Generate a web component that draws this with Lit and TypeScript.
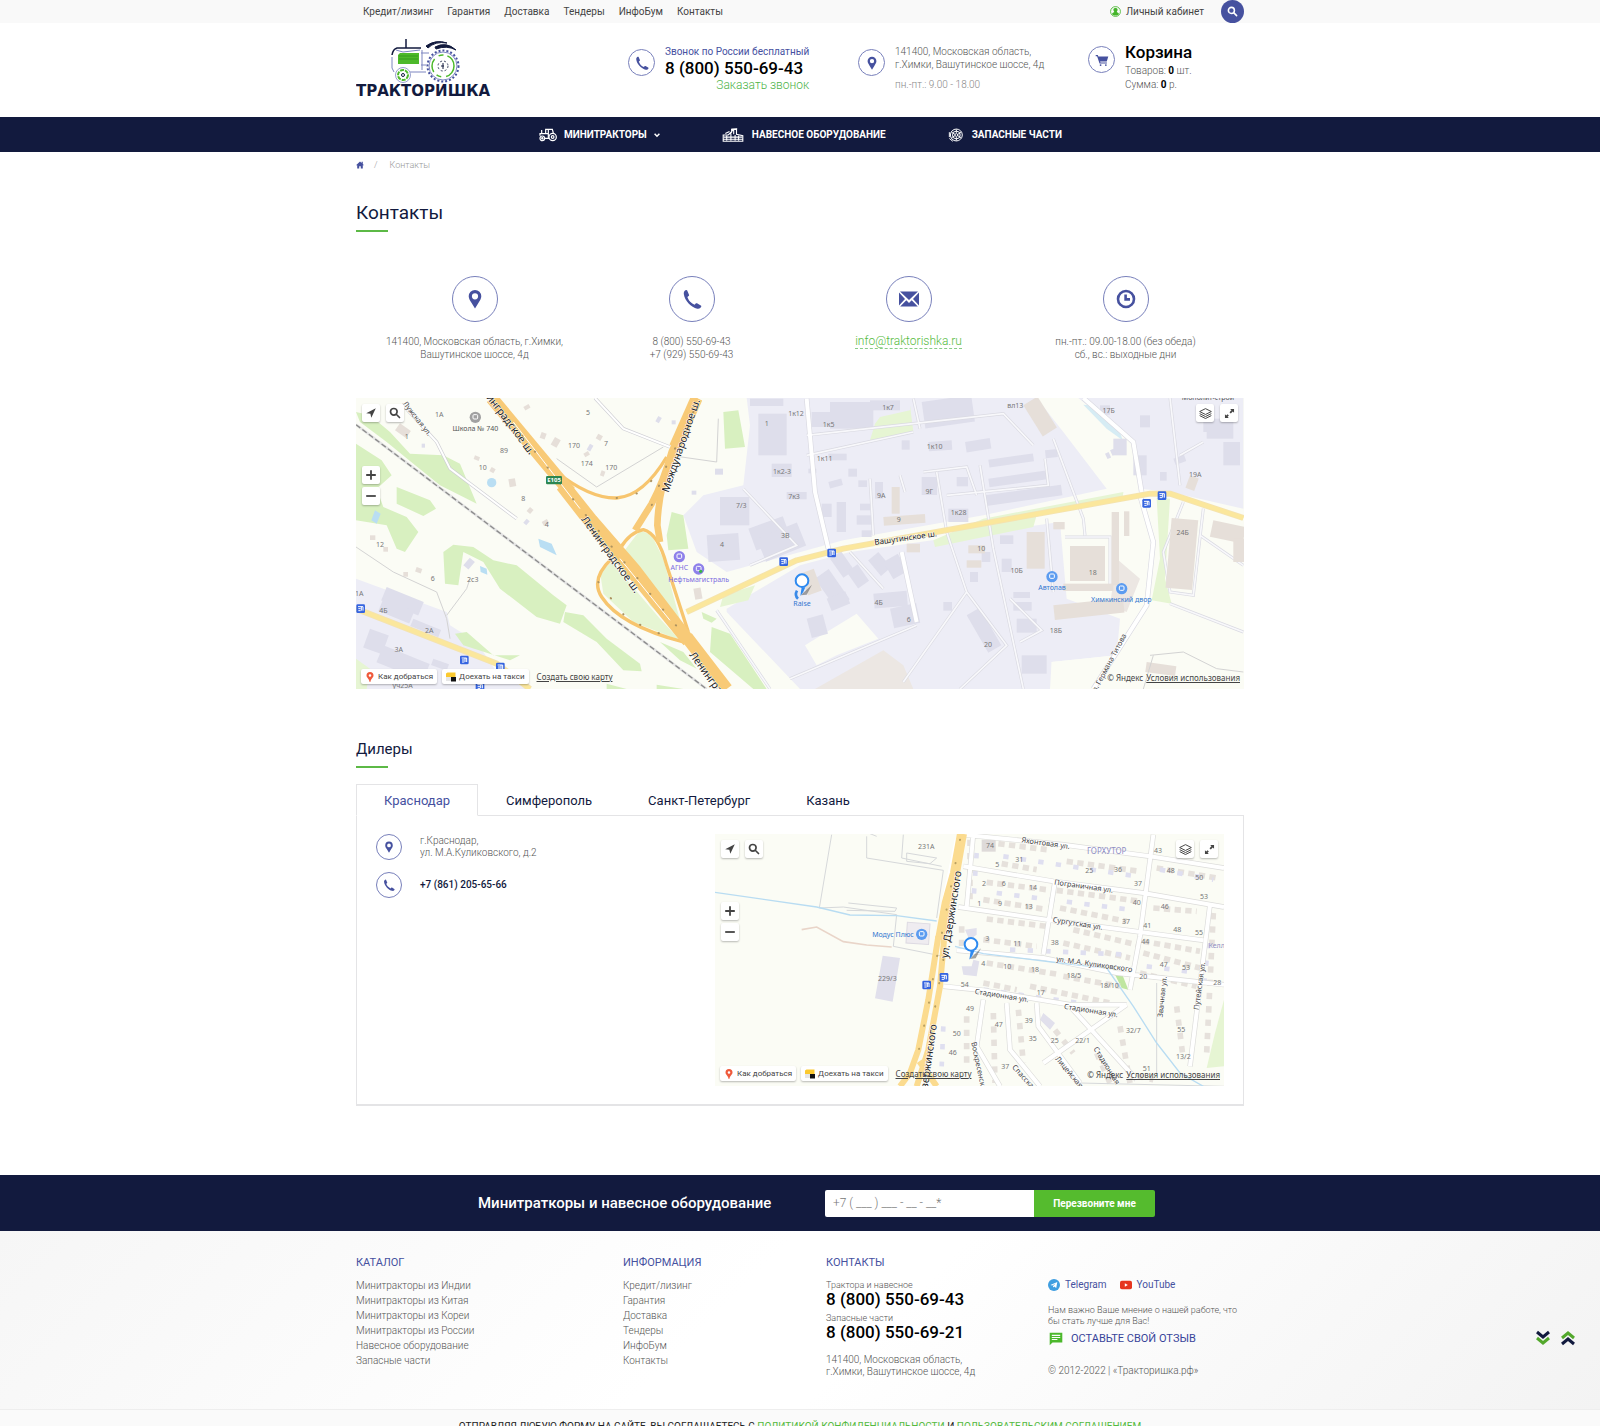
import { LitElement, html, svg, css } from "lit";
import { customElement, state } from "lit/decorators.js";
import { classMap } from "lit/directives/class-map.js";

const icons = {
  phone: svg`<path d="M5.2 1.6 7 5.8c.2.5 0 .8-.4 1.200L5.400 8c.6 1.700 1.500 3.400 2.800 4.700 1.300 1.400 2.900 2.400 4.400 3l1.100-1.200c.4-.4.8-.5 1.300-.2l3.800 2.200c.5.300.6.8.4 1.300-.7 1.500-2.300 2.300-3.900 1.900-3.200-.7-6.300-2.700-8.700-5.300C4.100 11.700 2.200 8.400 1.800 5 1.600 3.200 2.400 1.700 4 1.100c.5-.2 1 0 1.200.5Z"/>`,
  pin: svg`<path fill-rule="evenodd" d="M10 1a6.300 6.300 0 0 0-6.300 6.300c0 2.200 1.300 4.200 2.600 6.200L10 19.500l3.700-6c1.300-2 2.600-4 2.600-6.200A6.300 6.300 0 0 0 10 1Zm0 3.200a3.100 3.100 0 1 1 0 6.200 3.100 3.100 0 0 1 0-6.200Z"/>`,
  mail: svg`<path d="M0 3.500 6 10 0 16.500ZM20 3.500V16.500L14 10ZM1 2.500H19L10 11ZM1.200 17.500 7.300 11.200 10 14l2.700-2.800 6.100 6.300Z"/>`,
  clock: svg`<path fill="none" stroke="currentColor" stroke-width="2.600" d="M10 2a8 8 0 1 1 0 16 8 8 0 0 1 0-16ZM9.600 5.500V10.400H14"/>`,
  cart: svg`<path d="M1 3h3l.8 2H19l-2.200 7H7.300l.5 1.500H17V15H6.500L3 4.500H1ZM8 16a1.300 1.300 0 1 1 0 2.600A1.300 1.300 0 0 1 8 16Zm7.500 0a1.300 1.300 0 1 1 0 2.600 1.300 1.300 0 0 1 0-2.600Z"/>`,
  search: svg`<path fill="none" stroke="currentColor" stroke-width="2.800" stroke-linecap="round" d="M8 2.500a5.500 5.500 0 1 1 0 11 5.500 5.500 0 0 1 0-11ZM12.500 12.500 17.500 17.500"/>`,
  home: svg`<path d="M10 1 0 10.500h3V19h5v-6h4v6h5v-8.500h3L17 7.500V2h-3v2.800Z"/>`,
  arrow: svg`<path d="M18 2 2 10.500l7 .8L10.500 18Z"/>`,
  layers: svg`<path fill="none" stroke="currentColor" stroke-width="1.500" d="M10 2.500 19 7l-9 4.500L1 7ZM1 10.200l9 4.500 9-4.500M1 13.200l9 4.500 9-4.500"/>`,
  expand: svg`<path d="M11 3h6v6l-2-2-3 3-2-2 3-3ZM9 17H3v-6l2 2 2-2 2 2-2 2Z"/>`,
  plus: svg`<path d="M8.500 2h3v6.500H18v3h-6.500V18h-3v-6.500H2v-3h6.500Z"/>`,
  minus: svg`<path d="M2 8.500h16v3H2Z"/>`,
  user: svg`<circle cx="10" cy="10" r="9" fill="none" stroke="currentColor" stroke-width="1.500"/><path d="M10 3a4 4 0 0 1 2.500 7v1.200c2 .6 3.800 1.500 3.800 3.200-3 4-9.600 4-12.600 0 0-1.700 1.800-2.600 3.800-3.200V10A4 4 0 0 1 10 3Z"/>`,
  review: svg`<path fill-rule="evenodd" d="M1 1h18v14H5l-4 4ZM4 4v1.600h12V4ZM4 7v1.600h12V7ZM4 10v1.600h8V10Z"/>`,
  telegram: svg`<circle cx="10" cy="10" r="10" fill="#3f9ee0"/><path fill="#fff" d="M4 9.800 15.500 5.200 13.700 15 10.300 12.600 8.600 14.200 8.300 11.500 12.800 7.500 7 10.900Z"/>`,
  youtube: svg`<rect y="3" width="20" height="14" rx="3" fill="#e6351f"/><path fill="#fff" d="M8 7v6l5-3Z"/>`,
  route: svg`<path fill="#ef5a3c" fill-rule="evenodd" d="M10 0a7 7 0 0 0-7 7c0 4.500 5 6 6.300 13h1.400C12 13 17 11.500 17 7a7 7 0 0 0-7-7Zm0 4.500a2.600 2.600 0 1 1 0 5.200 2.600 2.600 0 0 1 0-5.200Z"/>`,
  taxi: svg`<path fill="#fbc92f" d="M0 3 3 1H19V10H0Z"/><path fill="#111" d="M10 10h10v9H10Z"/><path fill="#e6e6e6" d="M0 10h10v8H0Z"/>`,
  tractor: svg`<g fill="none" stroke="currentColor" stroke-width="1.800"><circle cx="5" cy="15" r="3.500"/><circle cx="5" cy="15" r="1"/><circle cx="20.500" cy="13" r="5.500"/><circle cx="20.500" cy="13" r="2"/><path d="M1.500 11V8H10V1.500H20L21.500 7M10 8h4V14M8.500 15H15M4 8V2.500M14 2v6"/></g>`,
  loader: svg`<g fill="none" stroke="currentColor" stroke-width="1.600"><path d="M1 19V10H8L13 6V2H20V9L29 11V19ZM9 9 15 3M16 3V9M2 13H28M1 16H29M6 11V18M12 8V18M18 10V18M23 11V18"/><path d="M4 8 10 5M13 2 21 1"/></g>`,
  part: svg`<g fill="none" stroke="currentColor" stroke-width="1.400"><circle cx="11" cy="10" r="8.500"/><circle cx="11" cy="10" r="5.500"/><circle cx="11" cy="10" r="2"/><path d="M11 2v5M4 6l5 3M4 14l5-3M11 18v-5M18 6l-5 3M18 14l-5-3M1 6v7M1 15l5 4"/></g>`,
};

const icon = (name: keyof typeof icons) =>
  html`<svg class="icon" viewBox="0 0 20 20" aria-hidden="true">${icons[name]}</svg>`;

type Label = [text: string, x: number, y: number, kind?: string, angle?: number];
const labels = (list: Label[]) =>
  list.map(([t, x, y, kind = "num", a = 0]) =>
    svg`<text class=${kind} x=${x} y=${y} text-anchor="middle" transform="rotate(${a} ${x} ${y})">${t}</text>`);
const stops = (list: [number, number][]) =>
  list.map(([x, y]) => svg`<g><rect x=${x - 13} y=${y - 13} width="26" height="26" rx="4" fill="#3564e0"/><path d="M${x - 8} ${y - 6}h15v12M${x + 2} ${y - 6}v12M${x - 7} ${y}h7M${x - 7} ${y + 6}h7" fill="none" stroke="#fff" stroke-width="3"/></g>`);
const poi = (x: number, y: number, color: string) =>
  svg`<circle cx=${x} cy=${y} r="17" fill=${color}/><rect x=${x - 7} y=${y - 8} width="14" height="13" rx="3" fill="none" stroke="#fff" stroke-width="3"/>`;
const marker = (x: number, y: number) =>
  svg`<path d="M${x} ${y}l34-32-16 30Z" fill="#5558" /><circle cx=${x + 4} cy=${y - 44} r="19" fill="#fff" stroke="#2e8af0" stroke-width="6"/><path d="M${x + 14} ${y - 24}Q${x + 9} ${y - 8} ${x - 1} ${y + 2}L${x + 3} ${y - 24}Z" fill="#2e8af0"/>`;

/** Houses in a block: x, y, w, h and an optional slant in degrees. */
type House = [number, number, number, number, number?];
const houses = (list: House[]) =>
  list.map(([x, y, w, h, a = 0]) => svg`<rect x=${x} y=${y} width=${w} height=${h} transform="rotate(${a} ${x} ${y})"/>`);

const khimkiGray: House[] = [
  [1225, 65, 85, 125], [1095, 230, 24, 18], [1110, 315, 88, 85], [1070, 430, 95, 80, -4], [1195, 410, 110, 70, -20], [1220, 440, 130, 75, -22],
  [1200, 20, 100, 22], [1265, 215, 60, 40], [1310, 300, 60, 22],
  [1385, 60, 70, 45], [1440, 30, 130, 80], [1560, 25, 90, 30], [1715, 30, 150, 80, -8], [1655, 145, 24, 28], [1735, 150, 70, 28, -4], [1845, 150, 75, 32, -9], [1915, 203, 135, 24, -8], [2085, 175, 36, 24, -6],
  [1435, 185, 55, 20], [1495, 230, 26, 24], [1525, 265, 26, 20], [1435, 270, 40, 20, -15], [1575, 270, 24, 50], [1715, 255, 46, 54], [1820, 255, 34, 28], [1915, 260, 180, 26, -8], [1905, 310, 230, 32, -8], [1795, 350, 60, 40],
  [1415, 335, 30, 40], [1460, 330, 28, 90], [1530, 335, 30, 20], [1520, 370, 45, 28], [1535, 415, 30, 20],
  [1440, 500, 40, 70, -35], [1490, 540, 40, 60, -35], [1585, 480, 60, 40, 50], [1600, 510, 50, 60, -30], [1570, 605, 100, 45, -5], [1620, 650, 80, 60, -12], [1395, 560, 50, 110, -35], [1370, 680, 50, 60, -15], [1430, 620, 60, 40, -22],
  [1850, 670, 45, 130, -30], [1780, 630, 26, 26], [1895, 480, 26, 30], [1860, 540, 24, 30], [1950, 430, 40, 26], [1955, 500, 30, 40], [1990, 600, 50, 18], [1990, 630, 55, 26], [2000, 680, 60, 42], [2015, 790, 75, 55],
  [2250, 40, 30, 28], [2290, 140, 40, 50], [2370, 70, 30, 36], [2350, 190, 40, 60], [2560, 60, 30, 60], [2570, 80, 80, 60], [2620, 150, 50, 70], [2430, 240, 20, 26], [2470, 200, 34, 20, -20], [2265, 185, 12, 18, -25], [2280, 175, 12, 18, -25],
  [110, 585, 120, 44, 22], [100, 620, 100, 40, 22], [190, 680, 90, 24, 22], [60, 710, 60, 60, 20], [100, 760, 150, 55, 22], [250, 800, 50, 20, 20], [340, 520, 30, 20, -50], [1375, 230, 24, 14], [215, 155, 10, 12], [530, 380, 12, 16, 40], [925, 72, 12, 18, 30], [720, 155, 12, 20, 30], [965, 85, 12, 12], [1025, 296, 14, 12],
];
const khimkiBeige: House[] = [
  [2020, 40, 50, 110, -32], [1625, 285, 24, 80], [1600, 375, 125, 26, -4], [1670, 455, 40, 26], [1855, 460, 50, 24], [1850, 505, 44, 22], [2030, 420, 54, 110], [2110, 390, 34, 22], [2160, 462, 105, 105], [2285, 360, 22, 220], [2322, 358, 16, 74], [2140, 575, 150, 22], [2110, 640, 210, 44, -6], [2465, 378, 80, 210, 5], [2590, 385, 100, 50, 12], [2650, 440, 40, 70], [2390, 810, 90, 30, 8], [2520, 250, 28, 40, 20],
  [1350, 545, 44, 70, -20], [135, 115, 26, 40, -55], [615, 135, 20, 26, 30], [520, 45, 18, 12, -30], [575, 120, 16, 18, 20], [745, 125, 16, 16, 30], [425, 225, 14, 14, 30], [475, 262, 20, 24, -10], [540, 345, 14, 16, 40], [755, 235, 12, 16, 20], [375, 190, 16, 12, 20], [575, 390, 18, 14, -30], [700, 185, 16, 12, -30], [60, 430, 16, 14], [100, 465, 14, 14], [200, 525, 18, 14, 20], [160, 540, 14, 14], [1030, 590, 22, 34, -10],
];
const khimkiLabels: Label[] = [
  ["Лужская ул.", 196, 84, "street small", 52], ["Ленинградское ш.", 456, 80, "street", 53], ["Ленинградское ш.", 774, 494, "street", 54], ["Ленинградское ш.", 1098, 900, "street", 54], ["Международное ш.", 1003, 164, "street", -71],
  ["Вашутинское ш.", 1668, 446, "street mid", -8], ["ул. Германа Титова", 2282, 820, "street small", -62],
  ["Школа № 740", 376, 118, "place"], ["АГНС", 988, 534, "violet"], ["Нефтьмагистраль", 1046, 570, "violet"], ["Raise", 1356, 641, "blue"], ["Автолав", 2106, 595, "blue"], ["Химкинский двор", 2314, 630, "blue"], ["Монолит-строй", 2574, 24, "place"],
  ["1А", 268, 76], ["1", 170, 140], ["89", 462, 184], ["10", 398, 235], ["5", 714, 69], ["170", 672, 168], ["7", 768, 161], ["174", 710, 222], ["170", 784, 233], ["8", 520, 326], ["4", 590, 404], ["12", 90, 465], ["6", 248, 568], ["2с3", 368, 570], ["1А", 28, 612], ["4Б", 100, 664], ["2А", 238, 724], ["3А", 146, 781], ["уч25А", 158, 888],
  ["1", 1250, 102], ["1к12", 1338, 72], ["1к2-3", 1296, 246], ["7/3", 1174, 348], ["3В", 1306, 437], ["4", 1116, 464], ["7к3", 1332, 320],
  ["1к7", 1614, 54], ["1к5", 1436, 104], ["1к10", 1754, 172], ["1к11", 1424, 206], ["9А", 1594, 318], ["9Г", 1738, 306], ["9", 1646, 389], ["1к28", 1826, 369], ["10", 1894, 478], ["10Б", 2000, 542], ["4Б", 1586, 639], ["6", 1676, 690], ["20", 1914, 764], ["18Б", 2118, 724], ["18", 2228, 548], ["вл13", 1996, 49], ["17Б", 2276, 64], ["19А", 2536, 255], ["24Б", 2498, 428],
];

const khimkiLanes = "M1370 130 1960 65 2050 160M1370 190 1690 120M1560 260 1570 430M1690 20 1710 110M1650 250 1665 300M1720 240 1850 225 1880 310M1790 310 2095 280 2085 200M1760 240 1790 420 1850 600 1660 870M1890 220 1930 470 2020 891M1500 480 1600 590M1700 700 1320 860M1850 600 1970 760 1830 891M1980 620 2075 715 2010 750M2110 140 2200 380 2205 430M2090 380 2110 600M2145 435 2280 435 2280 580 2150 590M2460 18 2490 280M2490 190 2560 150M2500 330 2440 480 2460 600 2530 610 2560 350M2550 430 2680 520M2460 635 2680 720M1100 655 1260 891M1180 290 1340 460 1200 520";
const khimkiRoads = "M1370 20 1395 300 1440 490M1655 480 1700 690M2370 310 2410 450 2390 640 2230 891M2200 18 2350 150 2375 300";

const khimki = () => svg`
  <rect x="18" y="18" width="2664" height="873" fill="#fbfcf5"/>
  <path fill="#ededf6" d="M1190 18H2060L2140 120 2270 290 1900 370 1480 445 1130 540 1040 480 1000 370 1060 310 1180 280 1200 100Z M1130 650 1350 520 1500 480 2130 390 2150 620 2310 680 2300 790 2105 810V891H1350L1130 660Z M2185 18H2680V350L2460 300 2370 290 2350 150Z M18 560 290 660 300 700 380 750 440 840 530 891H18Z"/>
  <g fill="#d8f0c0"><path d="M18 60 60 70 120 120 180 185 280 190 330 215 380 335 270 280 190 215 110 150 30 90Z M18 155 95 205 125 250 80 290 100 345 170 375 205 420 165 480 140 470 110 400 18 385Z M140 285 240 325 258 350 220 372 140 335Z M280 480 310 458 370 465 430 505 500 520 610 610 650 640 630 695 560 675 450 590 400 510 340 480 325 580 285 575Z M645 660 700 670 770 740 870 815 875 838 820 835 740 750 640 690Z M315 725 350 720 430 790 510 790 480 805 340 760Z M1120 60 1165 55 1185 165 1125 170Z M965 360 1000 370 1015 470 955 475 950 430Z M1085 705 1140 725 1190 800 1250 891H1210L1080 780Z M1055 660 1100 680 1085 692 1060 680Z M930 750 1000 780 1040 830 990 805Z M770 875 830 891H770Z M920 878 1000 891H920Z"/></g>
  <g fill="#e6f5d3"><path d="M1680 40 1690 120 1560 145 1575 95 1590 75 1680 55Z M1900 380 2320 300 2318 318 2060 370 2050 405 1755 465 1750 445Z M2420 318 2460 320 2445 560 2465 635 2405 625 2430 500Z M1120 610 1215 580 1195 625 1110 645Z M870 415 905 430 940 500 1005 740 900 640 820 480Z M750 540 785 510 930 680 990 745 850 690 760 605Z M18 800 60 830 50 891H18Z"/></g>
  <g fill="#b9def3"><circle cx="425" cy="272" r="14"/><path d="M75 355 92 365 80 395 64 385ZM565 440 605 455 620 490 570 465ZM390 522 410 530 412 548 392 540Z"/><path fill="#d6ecf4" d="M2200 38 2240 42 2310 120 2318 145 2270 110Z"/></g>
  <path fill="#ece7e3" d="M1395 891 1600 775 1660 820 1690 891Z M2300 500 2370 560 2330 660 2280 640Z"/>
  <path fill="#fbfcf5" d="M1365 760 1520 665 1585 740 1460 790 1400 820Z M2105 810 2300 790 2250 891H2100Z"/>
  <g fill="#dedeeb">${houses(khimkiGray)}</g>
  <g fill="none" stroke="#dadae2" stroke-width="9"><path d=${khimkiLanes}/><path stroke-width="16" d=${khimkiRoads}/></g>
  <g fill="none" stroke="#f8f8fb" stroke-width="5"><path d=${khimkiLanes}/><path stroke="#fff" stroke-width="12" d=${khimkiRoads}/></g>
  <g fill="#e6dfd9">${houses(khimkiBeige)}</g>
  <g fill="none" stroke="#d3d3d3" stroke-width="3"><path d="M18 465 130 540 260 600 290 680 300 740M290 670 350 590 360 560M1105 80 1100 210 960 190M620 200 740 285 940 165M2400 790 2500 780 2600 830 2680 840M2410 790 2380 891"/></g>
  <g fill="none"><path stroke="#cfcfd4" stroke-width="10" d="M160 40 260 150 300 230 500 380M735 18 820 110 960 165"/><path stroke="#fff" stroke-width="6" d="M160 40 260 150 300 230 500 380M735 18 820 110 960 165"/></g>
  <path d="M18 98 1070 891" fill="none" stroke="#e4e4e4" stroke-width="8"/><path d="M18 98 1070 891" fill="none" stroke="#8b8b8b" stroke-width="4" stroke-dasharray="16 8"/>
  <g fill="none" stroke-linejoin="round"><path stroke="#f4e3b0" stroke-width="18" d="M18 650 300 760 440 815 540 891M1010 660 1340 505 1480 470 2400 305 2460 305 2680 378"/><path stroke="#fbe79c" stroke-width="13" d="M18 650 300 760 440 815 540 891M1010 660 1340 505 1480 470 2400 305 2460 305 2680 378"/>
    <path stroke="#f7c56e" stroke-width="10" d="M620 240Q720 320 800 318 880 312 950 195M810 470Q840 420 880 413 925 425 950 520L1015 720M785 500Q720 560 755 615 810 700 1000 750"/>
    <path stroke="#f8ca77" stroke-width="20" d="M1040 18 965 180Q940 270 905 335L855 415"/><path stroke="#f8ca77" stroke-width="20" d="M1040 30 960 210Q925 300 922 400L930 450"/><path stroke="#f8ca77" stroke-width="36" d="M1040 18 975 165"/>
    <path stroke="#f8ca77" stroke-width="38" d="M425 18 660 300M1010 735 1130 891"/>
    <path stroke="#f8ca77" stroke-width="24" d="M650 280 730 380 860 530 1020 740M630 285 700 375 850 555 1010 752"/><path stroke="#fff" stroke-width="3" d="M490 90 690 350M810 500 960 685"/></g>
  <g fill="none" stroke="#ad9360" stroke-width="6" stroke-dasharray="1 60" stroke-linecap="round"><path d="M440 36 700 360 990 715M1030 60 950 220 905 340M800 318 880 300 930 230M745 570 830 680 980 748"/></g>
  <rect x="588" y="252" width="48" height="25" rx="4" fill="#2c8650"/><text class="badge" x="612" y="271" text-anchor="middle">E105</text>
  ${poi(376, 76, "#a1a1a1")}${poi(988, 494, "#8e80ea")}${poi(1046, 531, "#8e80ea")}<circle cx="1052" cy="538" r="5" fill="#38b444"/>
  ${poi(2106, 554, "#5c9cf0")}${poi(2315, 590, "#5c9cf0")}
  ${stops([[1301, 509], [1445, 483], [2390, 334], [2436, 311], [32, 650], [343, 804], [451, 825], [390, 883]])}
  ${labels(khimkiLabels)}
  <path d="M1341 596q-8 14 3 24" fill="none" stroke="#3a8ae8" stroke-width="8"/>${marker(1352, 610)}`;

const krasnodarLabels: Label[] = [
  ["ул. Дзержинского", 734, 286, "street", -81], ["ул. Дзержинского", 662, 746, "street", -82], ["Модус Плюс", 549, 351, "blue"], ["ГОРХУТОР", 1190, 104, "area"], ["Келлерова", 1550, 386, "area2"],
  ["Яхонтовая ул.", 1006, 78, "street small", 8], ["Пограничная ул.", 1120, 207, "street small", 8], ["Сургутская ул.", 1102, 319, "street small", 9], ["ул. М.А. Куликовского", 1152, 441, "street small", 8], ["Стадионная ул.", 874, 535, "street small", 9], ["Стадионная ул.", 1142, 580, "street small", 9], ["Звачная ул.", 1364, 532, "street small", -84], ["Путейская ул.", 1476, 500, "street small", -82], ["Воскресенская", 800, 746, "street small", 78], ["Спасская", 938, 780, "street small", 48], ["Лицейская", 1072, 762, "street small", 50], ["Стадионная", 1184, 742, "street small", 58],
  ["231А", 649, 88], ["229/3", 532, 485], ["54", 764, 502], ["49", 780, 575], ["50", 740, 648], ["46", 728, 705], ["74", 840, 84], ["31", 928, 126], ["5", 862, 142], ["2", 822, 199], ["6", 881, 199], ["14", 969, 210], ["1", 808, 258], ["9", 870, 258], ["13", 956, 269], ["25", 1138, 160], ["36", 1224, 156], ["37", 1284, 199], ["40", 1280, 256], ["43", 1344, 100], ["48", 1382, 160], ["50", 1468, 180], ["53", 1482, 239], ["46", 1364, 269], ["41", 1312, 324], ["48", 1402, 337], ["55", 1467, 346], ["37", 1248, 312], ["3", 832, 364], ["11", 922, 378], ["38", 1034, 375], ["44", 1306, 374], ["47", 1361, 443], ["53", 1428, 452], ["4", 820, 438], ["10", 892, 448], ["18", 975, 458], ["18/5", 1092, 475], ["18/10", 1198, 504], ["20", 1300, 478], ["28", 1522, 497], ["17", 992, 526], ["47", 866, 621], ["39", 956, 609], ["35", 968, 664], ["25", 1034, 670], ["22/1", 1118, 671], ["32/7", 1270, 639], ["55", 1414, 637], ["13/2", 1420, 718], ["51", 1310, 753], ["37", 886, 747],
];

const krasnodarStreets = "M760 45 1060 75 1320 110 1542 145M760 140 1030 185 1300 220 1542 262M745 262 1010 300 1480 362M740 392 1000 415 1220 460 1542 495M700 500 820 512 1080 555 1250 555M790 42 770 262M1330 45 1290 350 1260 510M1035 185 1000 405M1500 255 1440 740M820 540 800 680 870 800M890 550 900 690 990 800M980 550 985 620 1110 790M1080 560 1280 780M1250 555 1000 730";

const krasnodar = () => svg`
  <rect x="15" y="42" width="1527" height="758" fill="#fbfcf5"/>
  <path fill="#e6f5d3" d="M1542 540 1515 640 1490 745 1542 740Z"/><path fill="#bfe6a0" d="M1205 445 1235 460 1255 510 1235 505ZM1018 245 1012 295 1020 292Z"/>
  <g fill="none" stroke="#e6e1dc" stroke-width="17" stroke-dasharray="19 13">
    <path d="M865 72 1010 90M1070 125 1290 155M875 132 980 150M1340 145 1520 175M830 188 1010 210M1040 212 1290 245M820 240 1000 268M1330 265 1460 275M1050 265 1250 305M830 298 1010 320M1090 330 1280 375M820 360 980 380M1060 370 1260 415M1300 365 1470 395M1300 400 1470 445M830 430 1050 465M1060 470 1230 500M1290 460 1460 500M820 490 920 510M960 500 1200 550"/>
    <path d="M770 590V740M850 580 855 790M925 570 940 730M1010 600 1090 700M1230 620 1260 790M1400 560 1420 720M1510 280 1490 700M780 60V250M1160 700 1200 790M755 320V400M1280 770 1330 780" stroke-dasharray="19 21"/>
  </g>
  <g fill="none" stroke="#dfdff0" stroke-width="14" stroke-dasharray="16 37"><path d="M880 110 1280 170M860 220 1260 270M900 390 1250 405M820 510 1180 560M1310 440 1470 460M1350 150 1510 180M800 100 790 250M700 620 695 740M1495 370 1480 520"/></g>
  <g fill="#e1e0ec"><path d="M518 408 570 415 548 546 495 536ZM755 440 785 440 790 420 808 425 800 470 760 465ZM765 330 800 325V345L778 360ZM1000 580 1035 610 1020 630 990 600Z"/></g>
  <rect x="590" y="310" width="68" height="62" fill="#efecf0" stroke="#dddae2" stroke-width="3" transform="rotate(4 620 340)"/>
  <path fill="#dedad9" d="M815 60h42v36h-42Z"/>
  <g fill="none" stroke="#d6d8da" stroke-width="3"><path d="M365 45 328 265 400 262 560 285 550 380 700 410M470 50V115L700 152 680 295M580 45 575 115 695 140M590 100 680 115 660 132 590 125ZM415 250 560 265 555 275 410 272M480 42 500 50M1340 490V770M1110 790 1542 800"/></g>
  <path d=${krasnodarStreets} fill="none" stroke="#dcdcda" stroke-width="16"/>
  <g fill="none" stroke="#fff" stroke-width="12"><path d="${krasnodarStreets}M740 60 690 300"/></g>
  <g fill="none" stroke="#b8dcf2" stroke-width="4"><path d="M15 218 320 262 420 286 560 288 680 304M735 380 820 402 1050 430 1190 445 1270 560 1340 670 1410 760 1480 800"/></g>
  <path d="M275 330 320 322 400 366 470 376 545 382" fill="none" stroke="#e9d5c9" stroke-width="5"/>
  <g fill="none" stroke="#fbdb8f" stroke-linejoin="round"><path stroke-width="30" d="M756 42 735 160 710 250 690 360"/><path stroke-width="18" d="M685 350 655 540 625 690 600 760 570 800M703 350 690 500 655 690 620 800M628 725 680 800"/></g>
  <g fill="none" stroke="#b9a062" stroke-width="6" stroke-dasharray="1 70" stroke-linecap="round"><path d="M750 60 700 320 675 440 655 560 618 730M700 420 660 650"/></g>
  ${poi(635, 344, "#5c9cf0")}${stops([[702, 473], [650, 496]])}
  ${labels(krasnodarLabels)}${marker(779, 418)}`;

@customElement("area-map")
export class AreaMap extends LitElement {
  static properties = { area: {}, name: {} };
  declare area: string;
  declare name: string;
  static styles = css`
    :host { display: block; position: relative; overflow: hidden; font-family: "Noto Sans", sans-serif; font-weight: 400; }
    .canvas { display: block; width: 100%; height: 100%; }
    .canvas text { font-size: 21px; fill: #777; }
    .canvas .street { font-size: 31px; fill: #222; stroke: #fff; stroke-width: 3px; paint-order: stroke; }
    .canvas .mid { font-size: 24px; }
    .canvas .small { font-size: 22px; fill: #444; }
    .canvas .place { font-size: 21px; fill: #555; }
    .canvas .blue { font-size: 21px; fill: #3377d0; }
    .canvas .violet { font-size: 21px; fill: #7b6be0; }
    .canvas .area { font-size: 24px; fill: #8f8fc4; }
    .canvas .area2 { font-size: 21px; fill: #8f8fc4; }
    .canvas .badge { font-size: 18px; font-weight: 700; fill: #fff; }
    .icon { width: 12px; height: 12px; fill: currentColor; flex: none; }
    .tools, .zoom, .view, .actions, .rights { position: absolute; display: flex; }
    .tools { left: 6px; top: 6px; gap: 6px; }
    .view { right: 6px; top: 6px; gap: 6px; }
    .zoom { left: 6px; top: 68px; gap: 3px; flex-direction: column; }
    .actions { left: 5px; bottom: 5px; gap: 5px; align-items: center; }
    .rights { right: 4px; bottom: 5px; gap: 3px; color: #444; font-size: 8px; line-height: 12px; }
    button { display: flex; align-items: center; justify-content: center; width: 18px; height: 18px; padding: 0; border: 0; border-radius: 2px; background: #fff; color: #444; box-shadow: 0 1px 2px #0004; font: 8px/14px Roboto, "Noto Sans", sans-serif; }
    .view .icon { width: 13px; height: 13px; }
    .actions button { width: auto; height: 15px; padding: 0 4px; gap: 3px; }
    .actions .icon { width: 10px; height: 10px; }
    a { color: #444; font-size: 8px; line-height: 12px; }
    .actions a { margin-left: 3px; }
  `;
  render() {
    const first = this.area === "khimki";
    return html`
      <svg class="canvas" viewBox=${first ? "18 18 2664 873" : "15 42 1527 758"} preserveAspectRatio="xMidYMid slice" role="img" aria-label=${this.name}>
        ${first ? khimki() : krasnodar()}
      </svg>
      <div class="tools"><button aria-label="Моё местоположение">${icon("arrow")}</button><button aria-label="Поиск по карте">${icon("search")}</button></div>
      <div class="zoom"><button aria-label="Приблизить">${icon("plus")}</button><button aria-label="Отдалить">${icon("minus")}</button></div>
      <div class="view"><button aria-label="Слои">${icon("layers")}</button><button aria-label="На весь экран">${icon("expand")}</button></div>
      <div class="actions"><button>${icon("route")}Как добраться</button><button>${icon("taxi")}Доехать на такси</button><a href="#">Создать свою карту</a></div>
      <div class="rights"><span>© Яндекс</span><a href="#">Условия использования</a></div>`;
  }
}

const menu = ["Кредит/лизинг", "Гарантия", "Доставка", "Тендеры", "ИнфоБум", "Контакты"];
const catalog = ["Минитракторы из Индии", "Минитракторы из Китая", "Минитракторы из Кореи", "Минитракторы из России", "Навесное оборудование", "Запасные части"];
const cities = ["Краснодар", "Симферополь", "Санкт-Петербург", "Казань"];

@customElement("app-root")
export class AppRoot extends LitElement {
  @state() private city = 0;

  static styles = css`
    :host { display: block; font: 300 10px/13px Roboto, "Noto Sans", sans-serif; color: #555; background: #fff; }
    * { box-sizing: border-box; }
    a { color: inherit; text-decoration: none; }
    button, input { font-family: inherit; }
    p, h1, h2, h3, ul { margin: 0; padding: 0; }
    ul { list-style: none; }
    .icon { width: 14px; height: 14px; fill: currentColor; color: #46519f; flex: none; }
    .wrap { width: 100%; max-width: 888px; margin: 0 auto; }
    .top { background: #f9f9f9; }
    .top .wrap { display: flex; align-items: center; height: 23px; color: #444; font-weight: 400; }
    .links { display: flex; gap: 14px; padding-left: 7px; margin-right: auto; }
    .account { display: flex; align-items: center; gap: 5px; margin-right: 17px; }
    .account .icon { width: 11px; height: 11px; color: #44b52a; }
    .find { display: grid; place-items: center; width: 23px; height: 23px; padding: 0; border: 0; border-radius: 50%; background: #46519f; }
    .find .icon { width: 11px; height: 11px; color: #fff; }
    .head { display: grid; grid-template-columns: 272px 230px 230px 1fr; height: 94px; padding-top: 15px; }
    .logo { display: block; width: 140px; height: 64px; }
    .logo text { font: 700 15px "DejaVu Sans", sans-serif; fill: #121a3e; }
    .block { display: flex; gap: 10px; align-items: flex-start; }
    .ring { display: grid; place-items: center; flex: none; width: 27px; height: 27px; margin-top: 11px; border: 1px solid #7880bb; border-radius: 50%; }
    .lead { padding-top: 7px; }
    .lead p { white-space: nowrap; }
    .call { color: #46519f; font-weight: 400; }
    .tel { display: block; color: #000; font-weight: 500; font-size: 17px; line-height: 20px; white-space: nowrap; }
    .order { display: block; text-align: right; color: #4db348; font-size: 12px; line-height: 14px; }
    .hours { padding-top: 7px; color: #888; }
    .cart .ring { margin-top: 8px; }
    .cart h2 { color: #000; font-weight: 500; font-size: 17px; line-height: 20px; padding-bottom: 2px; }
    .cart b { color: #000; font-weight: 700; }
    .cart .lead { padding-top: 4px; line-height: 14px; }
    .nav { background: #121a3e; color: #fff; }
    .nav .wrap { display: flex; align-items: center; gap: 61px; height: 35px; padding-left: 183px; font-weight: 700; line-height: 16px; }
    .nav a { display: flex; align-items: center; gap: 7px; white-space: nowrap; }
    .nav .icon { color: #fff; width: 18px; height: 14px; }
    .nav .icon.down { width: 6px; height: 6px; }
    .nav .icon.big { width: 24px; }
    .crumbs { display: flex; align-items: center; gap: 10px; padding-top: 7px; font-size: 9px; line-height: 12px; color: #999; }
    .crumbs .icon { display: block; width: 8px; height: 8px; }
    .crumbs span:last-child { margin-left: 2px; }
    .title { color: #121a3e; font-weight: 400; }
    .title::after { content: ""; display: block; width: 32px; height: 2px; background: #5cb946; }
    h1.title { margin-top: 29px; font-size: 19px; line-height: 26px; }
    h1.title::after { margin-top: 4px; }
    .ways { display: grid; grid-template-columns: repeat(4, 1fr); margin: 44px 10px 0; height: 122px; text-align: center; }
    .ways .ring { width: 46px; height: 46px; margin: 0 auto 13px; }
    .ways .icon { width: 20px; height: 20px; }
    .mail { color: #55bb40; font-size: 12px; border-bottom: 1px dashed #8c8; }
    .main-map { height: 291px; }
    h2.title { margin-top: 50px; font-size: 15px; line-height: 20px; }
    h2.title::after { margin-top: 7px; }
    .tabs { display: flex; margin-top: 16px; }
    .tabs button { padding: 0 27px; height: 32px; margin-bottom: -1px; border: 1px solid transparent; background: none; color: #121a3e; font-size: 13px; font-weight: 400; }
    .tabs .on { border-color: #e4e4e6; border-bottom-color: #fff; background: #fff; color: #46519f; }
    .panel { display: grid; grid-template-columns: 1fr 509px; padding: 18px 19px; border: 1px solid #e4e4e6; border-bottom-width: 2px; }
    .dealer { display: grid; gap: 12px; align-content: start; }
    .dealer .row { display: flex; align-items: center; gap: 18px; line-height: 12px; }
    .dealer .ring { margin: 0; width: 26px; height: 26px; }
    .dealer a { color: #121a3e; font-weight: 500; }
    .dealer .icon { width: 12px; height: 12px; }
    .dealer-map { height: 252px; }
    .ask { margin-top: 69px; background: #121a3e; }
    .ask .wrap { display: flex; align-items: center; gap: 51px; height: 56px; padding-left: 122px; }
    .ask h2 { color: #fff; font-weight: 500; font-size: 15px; line-height: 20px; min-width: 296px; white-space: nowrap; }
    .ask form { display: flex; width: 330px; height: 27px; }
    .ask input { width: 209px; min-width: 0; padding: 0 8px; border: 0; border-radius: 2px 0 0 2px; background: #fff; font-size: 12px; font-weight: 300; }
    .ask input::placeholder { color: #777; opacity: 1; }
    .ask form button { flex: 1; padding: 0; border: 0; border-radius: 0 2px 2px 0; background: #55bb2e; color: #fff; font-size: 10px; font-weight: 700; }
    .foot { background: linear-gradient(135deg, #f6f6f6 0, #fbfbfb 25%, #fff 45%, #fff 55%, #f8f8f8 80%, #f3f3f3 100%); border-bottom: 1px solid #eee; }
    .foot .wrap { display: grid; grid-template-columns: 267px 203px 222px 1fr; height: 178px; padding-top: 24px; }
    .foot h3 { color: #46519f; font-weight: 400; font-size: 11px; line-height: 15px; }
    .foot ul { padding-top: 8px; line-height: 15px; }
    .foot .tel { line-height: 17px; padding-bottom: 4px; }
    .foot small { display: block; font-size: 9px; line-height: 12px; }
    .foot address { padding-top: 9px; font-style: normal; line-height: 12px; }
    .phones { padding-top: 9px; }
    .social { display: flex; align-items: center; gap: 5px; padding: 23px 0 14px; color: #46519f; font-weight: 400; }
    .social a { display: flex; align-items: center; gap: 5px; margin-right: 8px; }
    .social .icon { width: 12px; height: 12px; }
    .note { font-size: 9px; line-height: 11px; }
    .review { display: flex; align-items: center; gap: 8px; padding: 4px 0 18px 1px; color: #38449a; font-weight: 400; font-size: 11px; line-height: 15px; }
    .review .icon { color: #4cb82c; }
    .legal { padding: 9px 0; background: #fafafa; text-align: center; font-weight: 400; line-height: 15px; color: #222; }
    .legal a { color: #55bb40; }
    .jump { position: fixed; right: 25px; bottom: 80px; display: flex; gap: 11px; }
    .jump button { padding: 0; border: 0; background: none; line-height: 0; }
    .jump svg { width: 14px; height: 16px; fill: none; stroke-width: 3; }
  `;

  private block(name: keyof typeof icons) {
    return html`<span class="ring">${icon(name)}</span>`;
  }

  render() {
    return html`
      <div class="top"><div class="wrap">
        <nav class="links">${menu.map((m) => html`<a href="#">${m}</a>`)}</nav>
        <a class="account" href="#">${icon("user")}Личный кабинет</a>
        <button class="find" aria-label="Поиск">${icon("search")}</button>
      </div></div>
      <header class="wrap head">
        <a href="#" aria-label="Тракторишка"><svg class="logo" viewBox="0 0 140 64">
          <g fill="none" stroke="#121a3e">
            <path d="M36 17Q37 11 41 10H65M50 10V1" stroke-width="1.500"/><path d="M36 19V30L38 34M40 12 47 14 64 12M66 12V32M54 34H70M65 15H73M65 27H70" stroke="#7d85c0"/>
            <path d="M70 8Q80 1 91 5 79 3 72 10ZM79 9Q90 3 100 12 91 7 80 11Z" fill="#121a3e"/>
            <circle cx="87" cy="28" r="15.500" stroke="#46519f" stroke-width="2" stroke-dasharray="2 2"/><circle cx="87" cy="28" r="14" stroke="#7d85c0"/>
            <circle cx="47" cy="37" r="7.500" stroke="#9aa1cf"/>
          </g>
          <g fill="none" stroke="#4db92a"><circle cx="87" cy="28" r="11" stroke-width="1.500" stroke-dasharray="14 5 5 4"/><circle cx="47" cy="37" r="5" stroke-width="2" stroke-dasharray="4 1"/></g>
          <g fill="none" stroke="#121a3e"><circle cx="47" cy="37" r="1.500"/><circle cx="87" cy="28" r="5" stroke-width="0.800" stroke-dasharray="2 2"/><path d="M87 25v6M85 28h3"/></g>
          <path d="M42 17 44 15H63V26H42Z" fill="#4db92a"/><path d="M43 18H62M43 21H62" stroke="#2c8c1c" stroke-width="0.700"/>
          <text x="0" y="58">ТРАКТОРИШКА</text>
        </svg></a>
        <div class="block">${this.block("phone")}<div class="lead">
          <p class="call">Звонок по России бесплатный</p><a class="tel" href="#">8 (800) 550-69-43</a><a class="order" href="#">Заказать звонок</a>
        </div></div>
        <div class="block">${this.block("pin")}<div class="lead">
          <p>141400, Московская область,<br>г.Химки, Вашутинское шоссе, 4д</p><p class="hours">пн.-пт.: 9.00 - 18.00</p>
        </div></div>
        <div class="block cart">${this.block("cart")}<div class="lead">
          <h2>Корзина</h2><p>Товаров: <b>0</b> шт.</p><p>Сумма: <b>0</b> р.</p>
        </div></div>
      </header>
      <nav class="nav"><div class="wrap">
        <a href="#"><svg class="icon" viewBox="0 0 27 20">${icons.tractor}</svg>МИНИТРАКТОРЫ<svg class="icon down" viewBox="0 0 10 10"><path d="M1 3 5 7 9 3" fill="none" stroke="#fff" stroke-width="2.500"/></svg></a>
        <a href="#"><svg class="icon big" viewBox="0 0 30 20">${icons.loader}</svg>НАВЕСНОЕ ОБОРУДОВАНИЕ</a>
        <a href="#"><svg class="icon" viewBox="0 0 21 20">${icons.part}</svg>ЗАПАСНЫЕ ЧАСТИ</a>
      </div></nav>
      <main class="wrap">
        <div class="crumbs"><a href="#" aria-label="Главная">${icon("home")}</a><span>/</span><span>Контакты</span></div>
        <h1 class="title">Контакты</h1>
        <section class="ways">
          <div>${this.block("pin")}<p>141400, Московская область, г.Химки,<br>Вашутинское шоссе, 4д</p></div>
          <div>${this.block("phone")}<p>8 (800) 550-69-43<br>+7 (929) 550-69-43</p></div>
          <div>${this.block("mail")}<a class="mail" href="#">info@traktorishka.ru</a></div>
          <div>${this.block("clock")}<p>пн.-пт.: 09.00-18.00 (без обеда)<br>сб., вс.: выходные дни</p></div>
        </section>
        <area-map class="main-map" area="khimki" name="Карта: Химки"></area-map>
        <h2 class="title">Дилеры</h2>
        <div class="tabs" role="tablist">${cities.map((c, i) => html`<button role="tab" aria-selected=${i === this.city} class=${classMap({ on: i === this.city })} @click=${() => (this.city = i)}>${c}</button>`)}</div>
        <section class="panel">
          <div class="dealer">
            <div class="row">${this.block("pin")}<p>г.Краснодар,<br>ул. М.А.Куликовского, д.2</p></div>
            <div class="row">${this.block("phone")}<a href="#">+7 (861) 205-65-66</a></div>
          </div>
          <area-map class="dealer-map" area="krasnodar" name="Карта: Краснодар"></area-map>
        </section>
      </main>
      <section class="ask"><div class="wrap">
        <h2>Минитраткоры и навесное оборудование</h2>
        <form @submit=${(e: Event) => e.preventDefault()}><input type="tel" aria-label="Телефон" placeholder="+7 ( ___ ) ___ - __ - __*"><button>Перезвоните мне</button></form>
      </div></section>
      <footer>
        <div class="foot"><div class="wrap">
          <div><h3>КАТАЛОГ</h3><ul>${catalog.map((m) => html`<li><a href="#">${m}</a></li>`)}</ul></div>
          <div><h3>ИНФОРМАЦИЯ</h3><ul>${menu.map((m) => html`<li><a href="#">${m}</a></li>`)}</ul></div>
          <div><h3>КОНТАКТЫ</h3><div class="phones"><small>Трактора и навесное</small><a class="tel" href="#">8 (800) 550-69-43</a><small>Запасные части</small><a class="tel" href="#">8 (800) 550-69-21</a></div>
            <address>141400, Московская область,<br>г.Химки, Вашутинское шоссе, 4д</address></div>
          <div><div class="social"><a href="#">${icon("telegram")}Telegram</a><a href="#">${icon("youtube")}YouTube</a></div>
            <p class="note">Нам важно Ваше мнение о нашей работе, что<br>бы стать лучше для Вас!</p>
            <a class="review" href="#">${icon("review")}ОСТАВЬТЕ СВОЙ ОТЗЫВ</a>
            <p>© 2012-2022 | «Тракторишка.рф»</p></div>
        </div></div>
        <div class="legal">ОТПРАВЛЯЯ ЛЮБУЮ ФОРМУ НА САЙТЕ, ВЫ СОГЛАШАЕТЕСЬ С <a href="#">ПОЛИТИКОЙ КОНФИДЕНЦИАЛЬНОСТИ</a> И <a href="#">ПОЛЬЗОВАТЕЛЬСКИМ СОГЛАШЕНИЕМ</a></div>
      </footer>
      <div class="jump">
        <button aria-label="Вниз"><svg viewBox="0 0 14 16"><path stroke="#121a3e" d="M1 2 7 7 13 2"/><path stroke="#53a82c" d="M1 8 7 13 13 8"/></svg></button>
        <button aria-label="Наверх"><svg viewBox="0 0 14 16"><path stroke="#53a82c" d="M1 8 7 3 13 8"/><path stroke="#121a3e" d="M1 14 7 9 13 14"/></svg></button>
      </div>`;
  }
}
